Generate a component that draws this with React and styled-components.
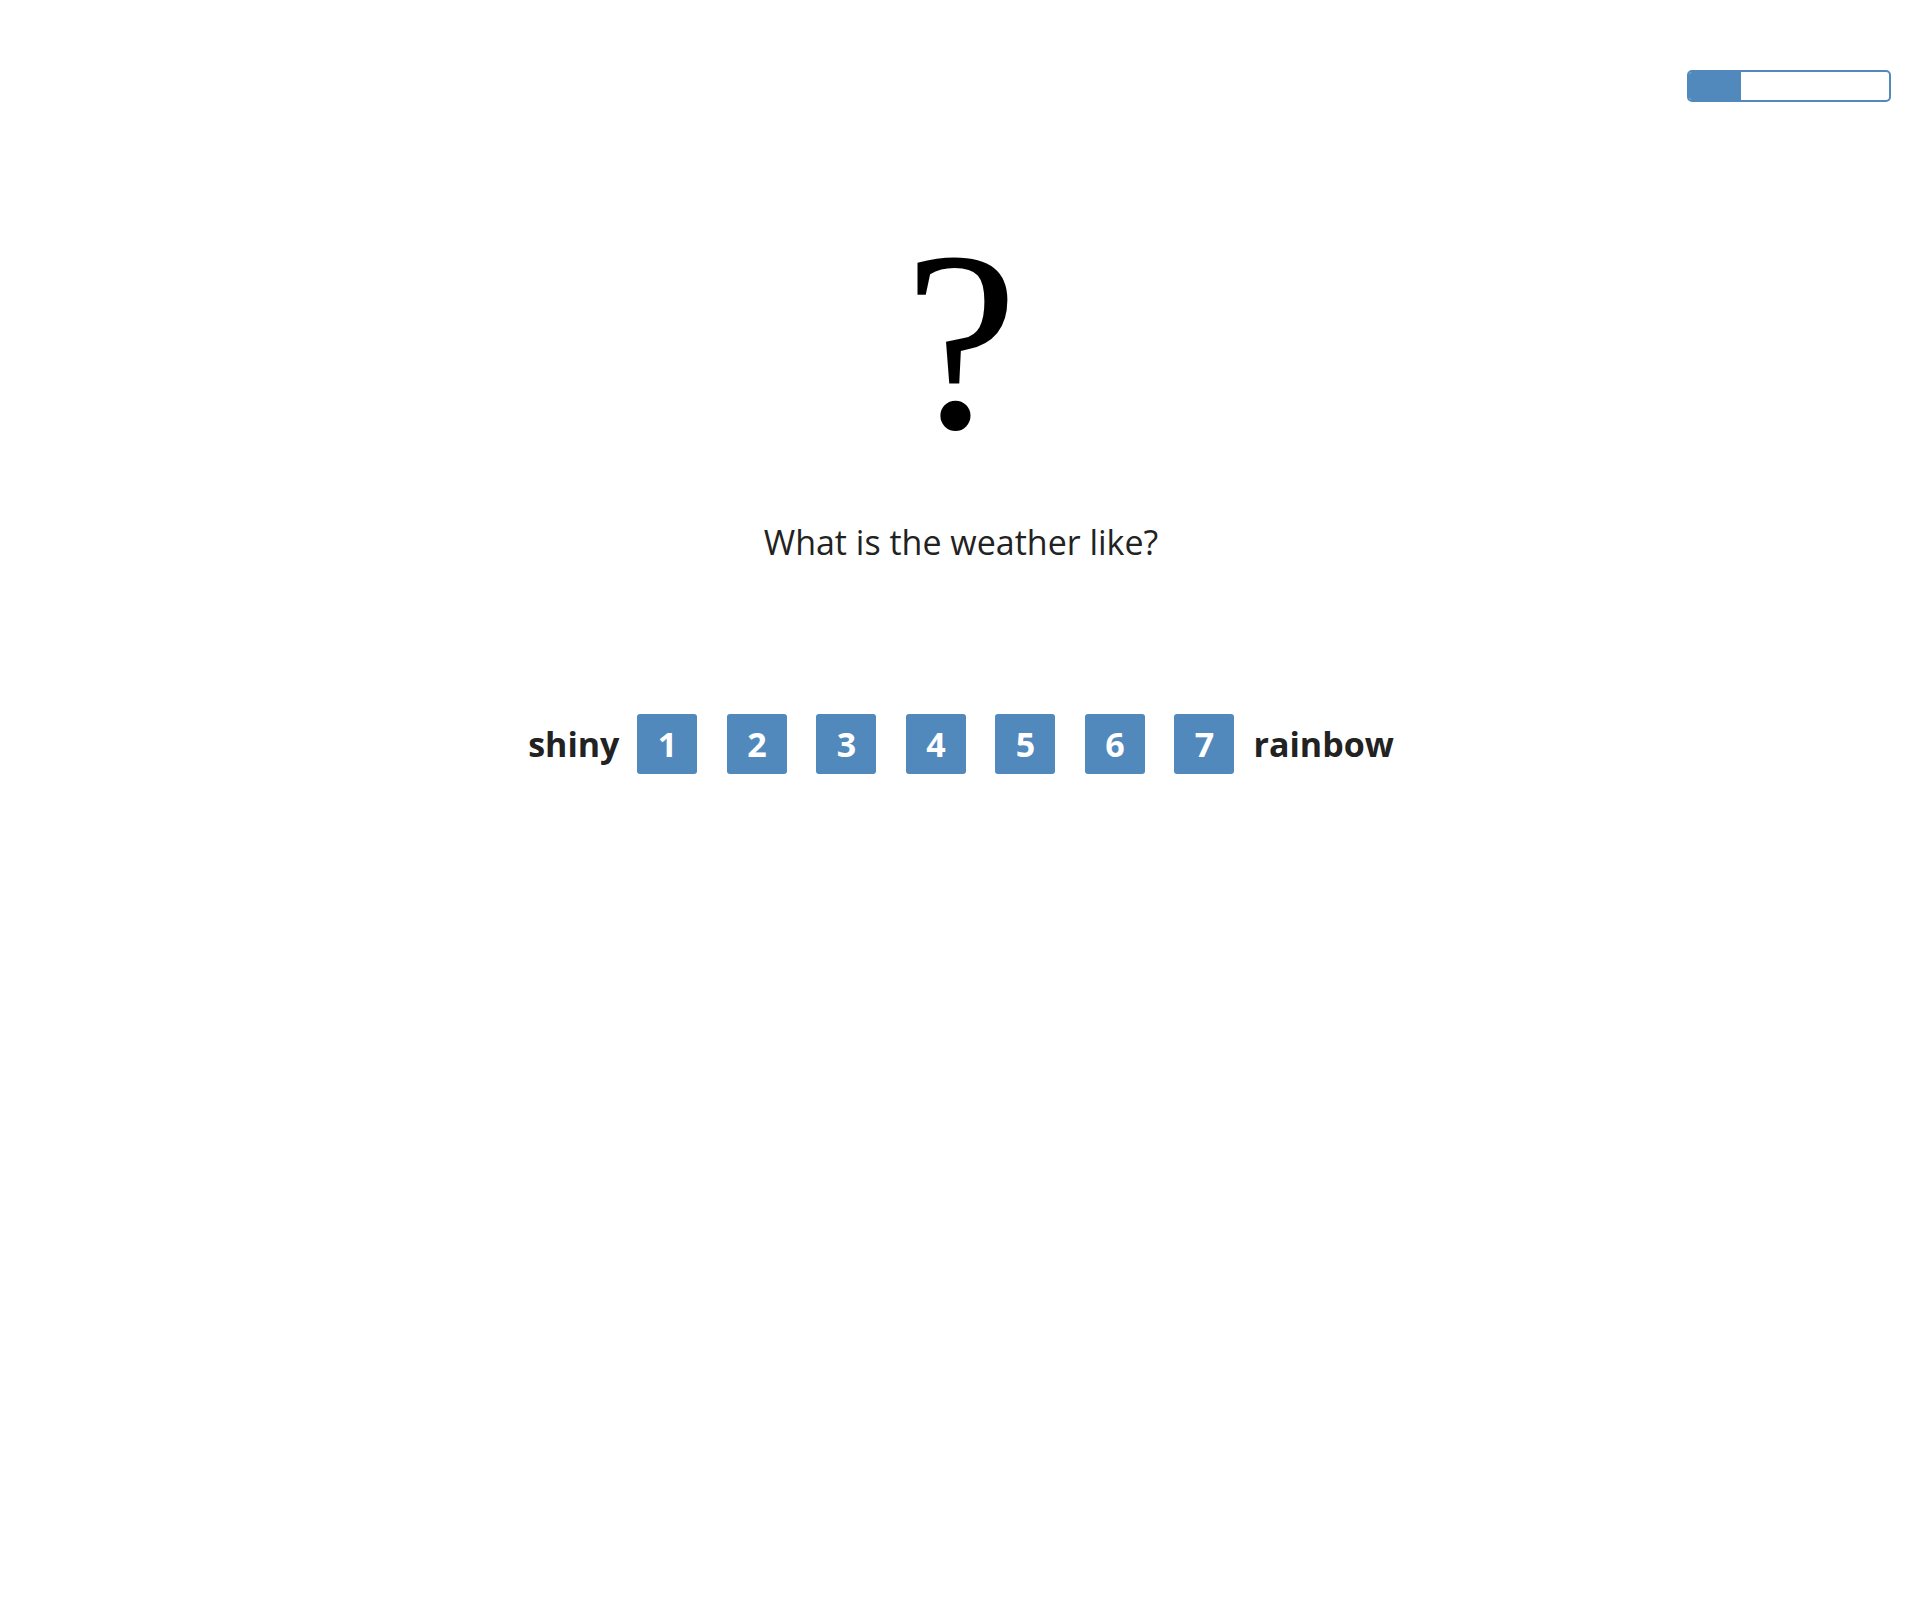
import React from "react";
import styled, { createGlobalStyle } from "styled-components";

const Global = createGlobalStyle`
  html, body { margin: 0; padding: 0; background: #fff; }
  body { font-family: "Open Sans", "Noto Sans", sans-serif; color: #222; }
`;

const Page = styled.div`
  display: flex;
  flex-direction: column;
  align-items: center;
  min-height: 1606px;
`;

const TopBar = styled.div`
  align-self: stretch;
  display: flex;
  justify-content: flex-end;
  padding: 70px 31px 0 0;
`;

const Progress = styled.div`
  width: 200px;
  height: 28px;
  border: 2px solid #5289bd;
  border-radius: 5px;
  overflow: hidden;
  display: flex;
`;

const ProgressFill = styled.div`
  background: #5289bd;
  height: 100%;
`;

const Mark = styled.div`
  margin-top: 111px;
  font-family: "Liberation Serif", "Times New Roman", serif;
  font-size: 256px;
  line-height: 1;
  color: #000;
`;

const Question = styled.p`
  margin: 50px 0 0;
  font-size: 34px;
  color: #222;
`;

const Scale = styled.div`
  margin-top: 149px;
  display: flex;
  align-items: center;
`;

const Label = styled.span`
  font-size: 34px;
  font-weight: 700;
  color: #222;
  margin: ${(p) => (p.$side === "left" ? "0 18px 0 0" : "0 0 0 19px")};
`;

const Buttons = styled.div`
  display: flex;
  gap: 29.5px;
`;

const Choice = styled.button`
  width: 60px;
  height: 60px;
  border: none;
  border-radius: 3px;
  background: #5289bd;
  color: #fff;
  font-family: "Open Sans", sans-serif;
  font-size: 34px;
  font-weight: 700;
  display: flex;
  align-items: center;
  justify-content: center;
  padding: 0;
  cursor: pointer;
`;

export default function App() {
  const progress = 26;
  return (
    <>
      <Global />
      <Page>
        <TopBar>
          <Progress>
            <ProgressFill style={{ width: `${progress}%` }} />
          </Progress>
        </TopBar>
        <Mark>?</Mark>
        <Question>What is the weather like?</Question>
        <Scale>
          <Label $side="left">shiny</Label>
          <Buttons>
            {[1, 2, 3, 4, 5, 6, 7].map((n) => (
              <Choice key={n}>{n}</Choice>
            ))}
          </Buttons>
          <Label $side="right">rainbow</Label>
        </Scale>
      </Page>
    </>
  );
}
